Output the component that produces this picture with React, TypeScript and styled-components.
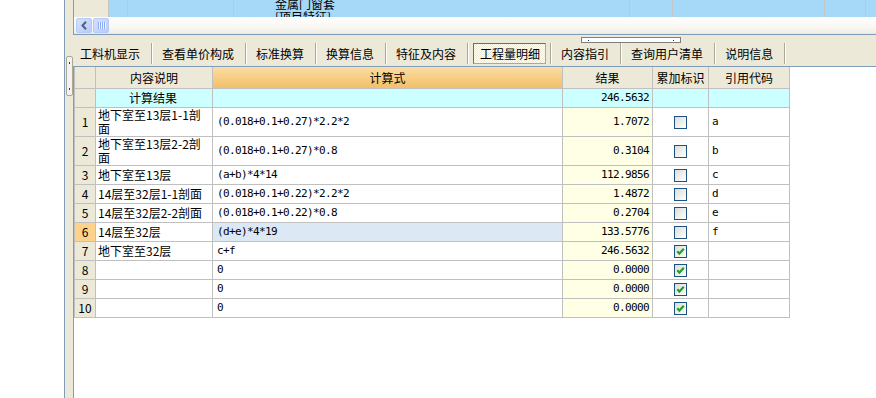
import React from 'react'
import styled, { createGlobalStyle } from 'styled-components'

const GlobalStyle = createGlobalStyle`
  * { box-sizing: border-box; }
  html, body { margin: 0; padding: 0; background: #fff; }
  body {
    font-family: "Noto Sans CJK SC", "Noto Sans", sans-serif;
    font-size: 12px;
    color: #000;
  }
`

interface Row {
  desc: string
  formula: string
  result: string
  checked: boolean
  code: string
  tall?: boolean
  selected?: boolean
}

const rows: Row[] = [
  { desc: '地下室至13层1-1剖面', formula: '(0.018+0.1+0.27)*2.2*2', result: '1.7072', checked: false, code: 'a', tall: true },
  { desc: '地下室至13层2-2剖面', formula: '(0.018+0.1+0.27)*0.8', result: '0.3104', checked: false, code: 'b', tall: true },
  { desc: '地下室至13层', formula: '(a+b)*4*14', result: '112.9856', checked: false, code: 'c' },
  { desc: '14层至32层1-1剖面', formula: '(0.018+0.1+0.22)*2.2*2', result: '1.4872', checked: false, code: 'd' },
  { desc: '14层至32层2-2剖面', formula: '(0.018+0.1+0.22)*0.8', result: '0.2704', checked: false, code: 'e' },
  { desc: '14层至32层', formula: '(d+e)*4*19', result: '133.5776', checked: false, code: 'f', selected: true },
  { desc: '地下室至32层', formula: 'c+f', result: '246.5632', checked: true, code: '' },
  { desc: '', formula: '0', result: '0.0000', checked: true, code: '' },
  { desc: '', formula: '0', result: '0.0000', checked: true, code: '' },
  { desc: '', formula: '0', result: '0.0000', checked: true, code: '' },
]

const tabs = ['工料机显示', '查看单价构成', '标准换算', '换算信息', '特征及内容', '工程量明细', '内容指引', '查询用户清单', '说明信息']
const activeTab = '工程量明细'

// widths of the upper (scrolled) grid cells, right border included
const topCols = [19, 106, 396, 43, 152, 41]

export default function App() {
  return (
    <>
      <GlobalStyle />
      <Page>
        <Blank />
        <Frame>
          <TopGrid>
            <BlueRow>
              <TopCell $w={35} $head />
              {topCols.map((w, i) => (
                <TopCell key={i} $w={w} $indent={i === 2 ? 41 : 0}>
                  {i === 2 && (
                    <CellText>
                      金属门窗套
                      <br />
                      [项目特征]
                    </CellText>
                  )}
                </TopCell>
              ))}
              <TopCell />
            </BlueRow>
            <ScrollBar>
              <ScrollButton>
                <svg width="6" height="9" viewBox="0 0 6 9">
                  <polyline points="5,0.8 1.5,4.5 5,8.2" fill="none" stroke="#4d6185" strokeWidth="2" />
                </svg>
              </ScrollButton>
              <ScrollThumb>
                <Grip />
                <Grip />
                <Grip />
                <Grip />
              </ScrollThumb>
            </ScrollBar>
          </TopGrid>

          <Lower>
            <Strip>
              <Splitter>
                <Dot />
                <Dot />
              </Splitter>
            </Strip>
            <RightCol>
              <HandleRow>
                <Handle>
                  <HandleDot />
                  <HandleDot />
                </Handle>
              </HandleRow>
              <TabsRow>
                {tabs.map((t, i) => (
                  <React.Fragment key={t}>
                    <Tab $active={t === activeTab} $first={i === 0}>
                      {t}
                    </Tab>
                    <Sep />
                  </React.Fragment>
                ))}
              </TabsRow>
              <Panel>
                <Grid>
                  <colgroup>
                    <col style={{ width: 22 }} />
                    <col style={{ width: 117 }} />
                    <col style={{ width: 350 }} />
                    <col style={{ width: 90 }} />
                    <col style={{ width: 56 }} />
                    <col style={{ width: 81 }} />
                  </colgroup>
                  <thead>
                    <tr>
                      <HeadCell />
                      <HeadCell>内容说明</HeadCell>
                      <HeadCell $formula>计算式</HeadCell>
                      <HeadCell>结果</HeadCell>
                      <HeadCell>累加标识</HeadCell>
                      <HeadCell>引用代码</HeadCell>
                    </tr>
                  </thead>
                  <tbody>
                    <BodyRow $h={19}>
                      <NumCell />
                      <DescCell $total>计算结果</DescCell>
                      <FormulaCell $total />
                      <ResultCell $total>246.5632</ResultCell>
                      <FlagCell $total />
                      <CodeCell $total />
                    </BodyRow>
                    {rows.map((r, i) => (
                      <BodyRow key={i} $h={r.tall ? 29 : 19}>
                        <NumCell $selected={r.selected}>{i + 1}</NumCell>
                        <DescCell>{r.desc}</DescCell>
                        <FormulaCell $selected={r.selected}>{r.formula}</FormulaCell>
                        <ResultCell>{r.result}</ResultCell>
                        <FlagCell>
                          <CheckBox>
                            {r.checked && (
                              <svg width="11" height="11" viewBox="0 0 11 11">
                                <polyline points="2.3,5.2 4.4,7.6 8.8,2.8" fill="none" stroke="#21a121" strokeWidth="2.2" />
                              </svg>
                            )}
                          </CheckBox>
                        </FlagCell>
                        <CodeCell>{r.code}</CodeCell>
                      </BodyRow>
                    ))}
                  </tbody>
                </Grid>
              </Panel>
            </RightCol>
          </Lower>
        </Frame>
      </Page>
    </>
  )
}

const Page = styled.div`
  display: flex;
  width: 876px;
  height: 398px;
  overflow: hidden;
  background: #fff;
`

const Blank = styled.div`
  width: 64px;
  flex: none;
`

const Frame = styled.div`
  flex: 1;
  min-width: 0;
  display: flex;
  flex-direction: column;
  border-left: 1px solid #7f9db9;
  background: #ece9d8;
`

const TopGrid = styled.div`
  flex: none;
  height: 35px;
  margin-left: 8px;
  display: flex;
  flex-direction: column;
  border-left: 1px solid #7f9db9;
  border-bottom: 1px solid #7f9db9;
`

const BlueRow = styled.div`
  display: flex;
  height: 17px;
`

const TopCell = styled.div<{ $w?: number; $head?: boolean; $indent?: number }>`
  flex: ${p => (p.$w ? 'none' : '1')};
  width: ${p => (p.$w ? `${p.$w}px` : 'auto')};
  padding-left: ${p => p.$indent || 0}px;
  border-right: ${p => (p.$w ? '1px solid #c5c5c5' : 'none')};
  background: ${p => (p.$head ? '#ece9d8' : '#a6d8f8')};
  overflow: hidden;
`

const CellText = styled.div`
  margin-top: -3px;
  font-size: 12px;
  line-height: 13px;
  white-space: nowrap;
`

const ScrollBar = styled.div`
  display: flex;
  align-items: center;
  height: 16px;
  padding: 1px 0 0 2px;
  background: linear-gradient(#fefefe 0%, #f9f8f4 60%, #efeee6 100%);
`

const ScrollButton = styled.div`
  width: 16px;
  height: 15px;
  display: flex;
  align-items: center;
  justify-content: center;
  border: 1px solid #b6c9f7;
  border-radius: 2px;
  background: linear-gradient(135deg, #d4e0fd, #b9cbf7);
`

const ScrollThumb = styled(ScrollButton)`
  margin-left: 1px;
  gap: 1px;
`

const Grip = styled.span`
  width: 1px;
  height: 7px;
  background: #8caef1;
  box-shadow: 1px 0 0 #eef3fe;
`

const Lower = styled.div`
  flex: 1;
  min-height: 0;
  display: flex;
`

const Strip = styled.div`
  width: 8px;
  flex: none;
  padding: 21px 0 0 1px;
`

const Splitter = styled.div`
  width: 7px;
  height: 40px;
  display: flex;
  flex-direction: column;
  align-items: center;
  justify-content: space-between;
  padding: 5px 0;
  border: 1px solid #aca899;
  border-radius: 2px;
  background: #f3f2ec;
`

const Dot = styled.span`
  width: 1px;
  height: 2px;
  background: #333;
`

const RightCol = styled.div`
  flex: 1;
  min-width: 0;
  display: flex;
  flex-direction: column;
`

const HandleRow = styled.div`
  height: 8px;
  flex: none;
  padding: 2px 0 0 508px;
`

const Handle = styled.div`
  width: 100px;
  height: 6px;
  display: flex;
  align-items: center;
  justify-content: space-between;
  padding: 0 6px;
  border: 1px solid #7e7e7e;
  background: #fff;
`

const HandleDot = styled.span`
  width: 1px;
  height: 1px;
  background: #1a237e;
`

const TabsRow = styled.div`
  flex: none;
  height: 23px;
  display: flex;
  align-items: flex-start;
`

const Tab = styled.div<{ $active?: boolean; $first?: boolean }>`
  height: 21px;
  font-size: 12px;
  white-space: nowrap;
  padding: ${p => (p.$active ? '0 5px 0 6px' : p.$first ? '0 11px 0 7px' : '0 11px 0 9px')};
  margin: ${p => (p.$active ? '0 4px' : '0')};
  border: ${p => (p.$active ? '1px solid' : 'none')};
  border-color: #716f64 #aca899 #aca899 #716f64;
  line-height: ${p => (p.$active ? '19px' : '21px')};
  background: ${p =>
    p.$active ? 'repeating-conic-gradient(#ffffff 0 25%, #ece9d8 0 50%) 0 0 / 2px 2px' : 'transparent'};
`

const Sep = styled.span`
  width: 2px;
  height: 21px;
  flex: none;
  border-left: 1px solid #aca899;
  border-right: 1px solid #fff;
`

const Panel = styled.div`
  flex: 1;
  border-top: 1px solid #7f9db9;
  border-left: 1px solid #7f9db9;
  background: #fff;
`

const Grid = styled.table`
  border-collapse: separate;
  border-spacing: 0;
  table-layout: fixed;
  width: 716px;
`

const HeadCell = styled.th<{ $formula?: boolean }>`
  height: 22px;
  padding: 0;
  font-weight: normal;
  font-size: 12px;
  line-height: 14px;
  text-align: center;
  border-right: 1px solid #c0c0c0;
  border-bottom: 1px solid #c0c0c0;
  background: ${p => (p.$formula ? 'linear-gradient(#fbdda4, #f2c067)' : '#ece9d8')};
  &:first-child {
    border-left: 1px solid #c0c0c0;
  }
`

const BodyRow = styled.tr<{ $h: number }>`
  height: ${p => p.$h}px;
`

const Cell = styled.td`
  padding: 0;
  font-size: 12px;
  line-height: 14px;
  vertical-align: middle;
  border-right: 1px solid #c0c0c0;
  border-bottom: 1px solid #c0c0c0;
`

const Mono = styled(Cell)`
  font-family: "DejaVu Sans Mono", "Liberation Mono", monospace;
  font-size: 11px;
  letter-spacing: -0.62px;
  white-space: nowrap;
`

const NumCell = styled(Cell)<{ $selected?: boolean }>`
  border-left: 1px solid #c0c0c0;
  text-align: center;
  background: ${p => (p.$selected ? '#fdd38c' : '#ece9d8')};
`

const DescCell = styled(Cell)<{ $total?: boolean }>`
  padding: 0 4px 0 2px;
  text-align: ${p => (p.$total ? 'center' : 'left')};
  background: ${p => (p.$total ? '#ccffff' : '#fff')};
`

const FormulaCell = styled(Mono)<{ $total?: boolean; $selected?: boolean }>`
  padding-left: 4px;
  background: ${p => (p.$total ? '#ccffff' : p.$selected ? '#dde8f5' : '#fff')};
`

const ResultCell = styled(Mono)<{ $total?: boolean }>`
  padding-right: 3px;
  text-align: right;
  background: ${p => (p.$total ? '#ccffff' : '#ffffe6')};
`

const FlagCell = styled(Cell)<{ $total?: boolean }>`
  background: ${p => (p.$total ? '#ccffff' : '#fff')};
`

const CodeCell = styled(Mono)<{ $total?: boolean }>`
  padding-left: 3px;
  background: ${p => (p.$total ? '#ccffff' : '#fff')};
`

const CheckBox = styled.span`
  display: flex;
  align-items: center;
  justify-content: center;
  width: 13px;
  height: 13px;
  margin: 0 auto;
  border: 1px solid #1c5180;
  background: linear-gradient(135deg, #dcdcd7, #ffffff);
`
